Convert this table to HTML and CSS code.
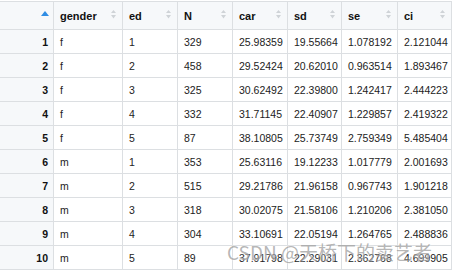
FILE: index.html
```html
<!DOCTYPE html>
<html lang="zh-CN">
<head>
    <meta charset="UTF-8">
    <meta name="viewport" content="width=device-width, initial-scale=1.0">
    <title>Data View</title>
    <link rel="stylesheet" href="styles.css">
</head>
<body>
    <div class="viewer">
        <div class="grid" id="grid">
            <div class="cell head rowname">
                <svg class="sort active" width="8" height="5" viewBox="0 0 8 5"><path d="M0 5 L4 0 L8 5 Z"/></svg>
            </div>
            <div class="cell head"><span>gender</span><svg class="sort" width="5" height="9" viewBox="0 0 5 9"><path d="M0 3 L2.5 0 L5 3 Z M0 5 L5 5 L2.5 8.5 Z"/></svg></div>
            <div class="cell head"><span>ed</span><svg class="sort" width="5" height="9" viewBox="0 0 5 9"><path d="M0 3 L2.5 0 L5 3 Z M0 5 L5 5 L2.5 8.5 Z"/></svg></div>
            <div class="cell head"><span>N</span><svg class="sort" width="5" height="9" viewBox="0 0 5 9"><path d="M0 3 L2.5 0 L5 3 Z M0 5 L5 5 L2.5 8.5 Z"/></svg></div>
            <div class="cell head"><span>car</span><svg class="sort" width="5" height="9" viewBox="0 0 5 9"><path d="M0 3 L2.5 0 L5 3 Z M0 5 L5 5 L2.5 8.5 Z"/></svg></div>
            <div class="cell head"><span>sd</span><svg class="sort" width="5" height="9" viewBox="0 0 5 9"><path d="M0 3 L2.5 0 L5 3 Z M0 5 L5 5 L2.5 8.5 Z"/></svg></div>
            <div class="cell head"><span>se</span><svg class="sort" width="5" height="9" viewBox="0 0 5 9"><path d="M0 3 L2.5 0 L5 3 Z M0 5 L5 5 L2.5 8.5 Z"/></svg></div>
            <div class="cell head"><span>ci</span><svg class="sort" width="5" height="9" viewBox="0 0 5 9"><path d="M0 3 L2.5 0 L5 3 Z M0 5 L5 5 L2.5 8.5 Z"/></svg></div>
        </div>
        <div class="watermark">CSDN @天桥下的卖艺者</div>
    </div>

    <script>
        // 数据行
        const rows = [
            ['f', 1, 329, '25.98359', '19.55664', '1.078192', '2.121044'],
            ['f', 2, 458, '29.52424', '20.62010', '0.963514', '1.893467'],
            ['f', 3, 325, '30.62492', '22.39800', '1.242417', '2.444223'],
            ['f', 4, 332, '31.71145', '22.40907', '1.229857', '2.419322'],
            ['f', 5, 87, '38.10805', '25.73749', '2.759349', '5.485404'],
            ['m', 1, 353, '25.63116', '19.12233', '1.017779', '2.001693'],
            ['m', 2, 515, '29.21786', '21.96158', '0.967743', '1.901218'],
            ['m', 3, 318, '30.02075', '21.58106', '1.210206', '2.381050'],
            ['m', 4, 304, '33.10691', '22.05194', '1.264765', '2.488836'],
            ['m', 5, 89, '37.91798', '22.29031', '2.362768', '4.699905']
        ];

        const grid = document.getElementById('grid');
        rows.forEach(function(row, i) {
            const num = document.createElement('div');
            num.className = 'cell rowname';
            num.textContent = i + 1;
            grid.appendChild(num);

            row.forEach(function(value) {
                const cell = document.createElement('div');
                cell.className = 'cell';
                cell.textContent = value;
                grid.appendChild(cell);
            });
        });
    </script>
</body>
</html>
```

FILE: styles.css
```css
body {
    margin: 0;
    background-color: #fff;
    font-family: 'Liberation Sans', Arial, sans-serif;
    color: #222;
}

.viewer {
    position: relative;
    width: 453px;
    height: 271px;
    overflow: hidden;
    padding-top: 1px;
    box-sizing: border-box;
}

.grid {
    display: grid;
    grid-template-columns: 54px 69px 55px 55px 55px 54px 56px 54px;
    grid-auto-rows: 24px;
    width: 452px;
    border-top: 1px solid #dcdfe2;
}

.cell {
    box-sizing: border-box;
    border-right: 1px solid #dcdfe2;
    border-bottom: 1px solid #dcdfe2;
    padding: 0 6px;
    font-size: 10.5px;
    display: flex;
    align-items: center;
    white-space: nowrap;
    background-color: #fff;
}

.cell.head {
    height: 28px;
    background-color: #f6f8fa;
    font-size: 11px;
    font-weight: bold;
    color: #111;
    justify-content: space-between;
    padding-top: 1px;
}

.grid > .head {
    grid-row: 1;
}

.grid {
    grid-template-rows: 28px;
}

.cell.rowname {
    background-color: #f6f8fa;
    justify-content: flex-end;
    padding-right: 5px;
    font-weight: bold;
    color: #111;
}

.sort {
    fill: #cfd3d7;
    margin-top: -4px;
}

.sort.active {
    fill: #2f8de4;
    margin-top: -6px;
    margin-right: -1px;
}

.watermark {
    position: absolute;
    left: 227px;
    top: 240px;
    font-family: 'Noto Sans CJK SC', sans-serif;
    font-size: 19px;
    line-height: 24px;
    color: rgba(120, 120, 120, 0.55);
    text-shadow: 0 0 2px rgba(255, 255, 255, 0.8);
    white-space: nowrap;
}
```
